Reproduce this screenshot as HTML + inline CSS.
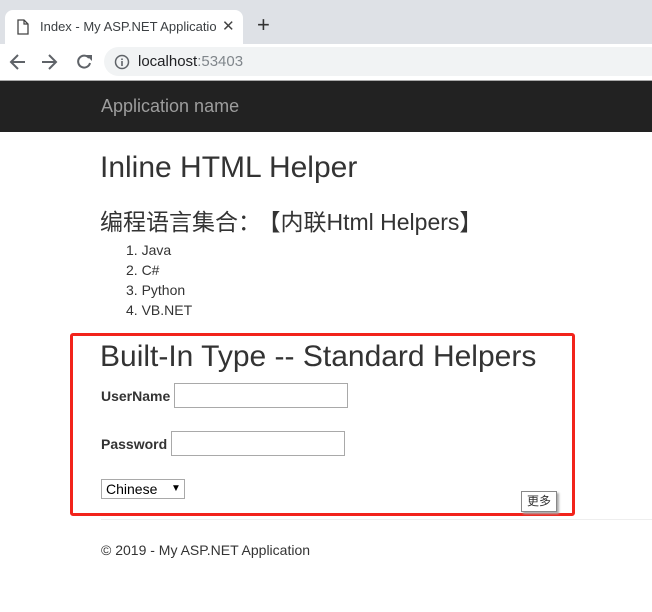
<!DOCTYPE html>
<html><head><meta charset="utf-8"><style>
body{margin:0;width:652px;height:612px;position:relative;overflow:hidden;background:#fff;font-family:"Liberation Sans","Noto Sans CJK SC",sans-serif;color:#333}
.a{position:absolute;white-space:nowrap}
</style></head><body>
<div class="a" style="left:0;top:0;width:652px;height:44px;background:#dee1e6"></div>
<div class="a" style="left:5px;top:10px;width:238px;height:34px;background:#fff;border-radius:8px 8px 0 0"></div>
<svg class="a" style="left:17px;top:19px" width="12" height="16"><path d="M1 1h6l4 4v10H1z" fill="none" stroke="#444" stroke-width="1.3"/><path d="M7 1v4h4" fill="none" stroke="#444" stroke-width="1.2"/></svg>
<div class="a" style="left:40px;top:19px;font-size:13px;color:#3c4043;width:176px;overflow:hidden">Index - My ASP.NET Applicatio</div>
<div class="a" style="left:222px;top:17px;font-size:15px;color:#444">✕</div>
<div class="a" style="left:257px;top:12px;font-size:22px;color:#333">+</div>
<div class="a" style="left:0;top:44px;width:652px;height:36px;background:#fff"></div>
<svg class="a" style="left:8px;top:52px" width="90" height="20"><g fill="none" stroke="#5f6368" stroke-width="2"><path d="M3 10h14M10 3L3 10l7 7"/><path d="M34 10h14M41 3l7 7-7 7"/><path d="M81 6a6 6 0 1 0 1 5"/></g><path d="M78 3h6v6z" fill="#5f6368"/></svg>
<div class="a" style="left:104px;top:47px;width:560px;height:29px;background:#f1f3f4;border-radius:15px"></div>
<svg class="a" style="left:114px;top:54px" width="16" height="16"><circle cx="8" cy="8" r="6.5" fill="none" stroke="#5f6368" stroke-width="1.5"/><path d="M8 7v5M8 4.5v1.5" stroke="#5f6368" stroke-width="1.6"/></svg>
<div class="a" style="left:138px;top:53px;font-size:15px;color:#202124">localhost<span style="color:#80868b">:53403</span></div>
<div class="a" style="left:0;top:80px;width:652px;height:51px;background:#222;border-top:1px solid #aaa"></div>
<div class="a" style="left:101px;top:96px;font-size:18px;color:#9d9d9d">Application name</div>
<div class="a" style="left:100px;top:151px;font-size:30px;color:#333">Inline HTML Helper</div>
<div class="a" style="left:100px;top:203px;font-size:23px;color:#333">编程语言集合：<span style="margin-left:8px">【内联Html Helpers】</span></div>
<div class="a" style="left:126px;top:240px;font-size:14px;line-height:20px">1. Java<br>2. C#<br>3. Python<br>4. VB.NET</div>
<div class="a" style="left:70px;top:333px;width:499px;height:177px;border:3px solid #f2231b;border-radius:3px"></div>
<div class="a" style="left:100px;top:340px;font-size:30px;color:#333">Built-In Type -- Standard Helpers</div>
<div class="a" style="left:101px;top:388px;font-size:14px;font-weight:bold">UserName</div>
<div class="a" style="left:174px;top:383px;width:172px;height:23px;border:1px solid #a9a9a9"></div>
<div class="a" style="left:101px;top:436px;font-size:14px;font-weight:bold">Password</div>
<div class="a" style="left:171px;top:431px;width:172px;height:23px;border:1px solid #a9a9a9"></div>
<div class="a" style="left:101px;top:479px;width:82px;height:18px;border:1px solid #a9a9a9;font-size:14px;color:#000"><span style="position:absolute;left:4px;top:1px">Chinese</span><span style="position:absolute;left:69px;top:3px;font-size:10px">▼</span></div>
<div class="a" style="left:521px;top:491px;width:34px;height:19px;border:1px solid #888;background:#fff;box-shadow:2px 2px 2px #aaa;font-size:12px;color:#333;text-align:center;line-height:19px">更多</div>
<div class="a" style="left:101px;top:519px;width:551px;height:1px;background:#eee"></div>
<div class="a" style="left:101px;top:542px;font-size:14px">© 2019 - My ASP.NET Application</div>
</body></html>
